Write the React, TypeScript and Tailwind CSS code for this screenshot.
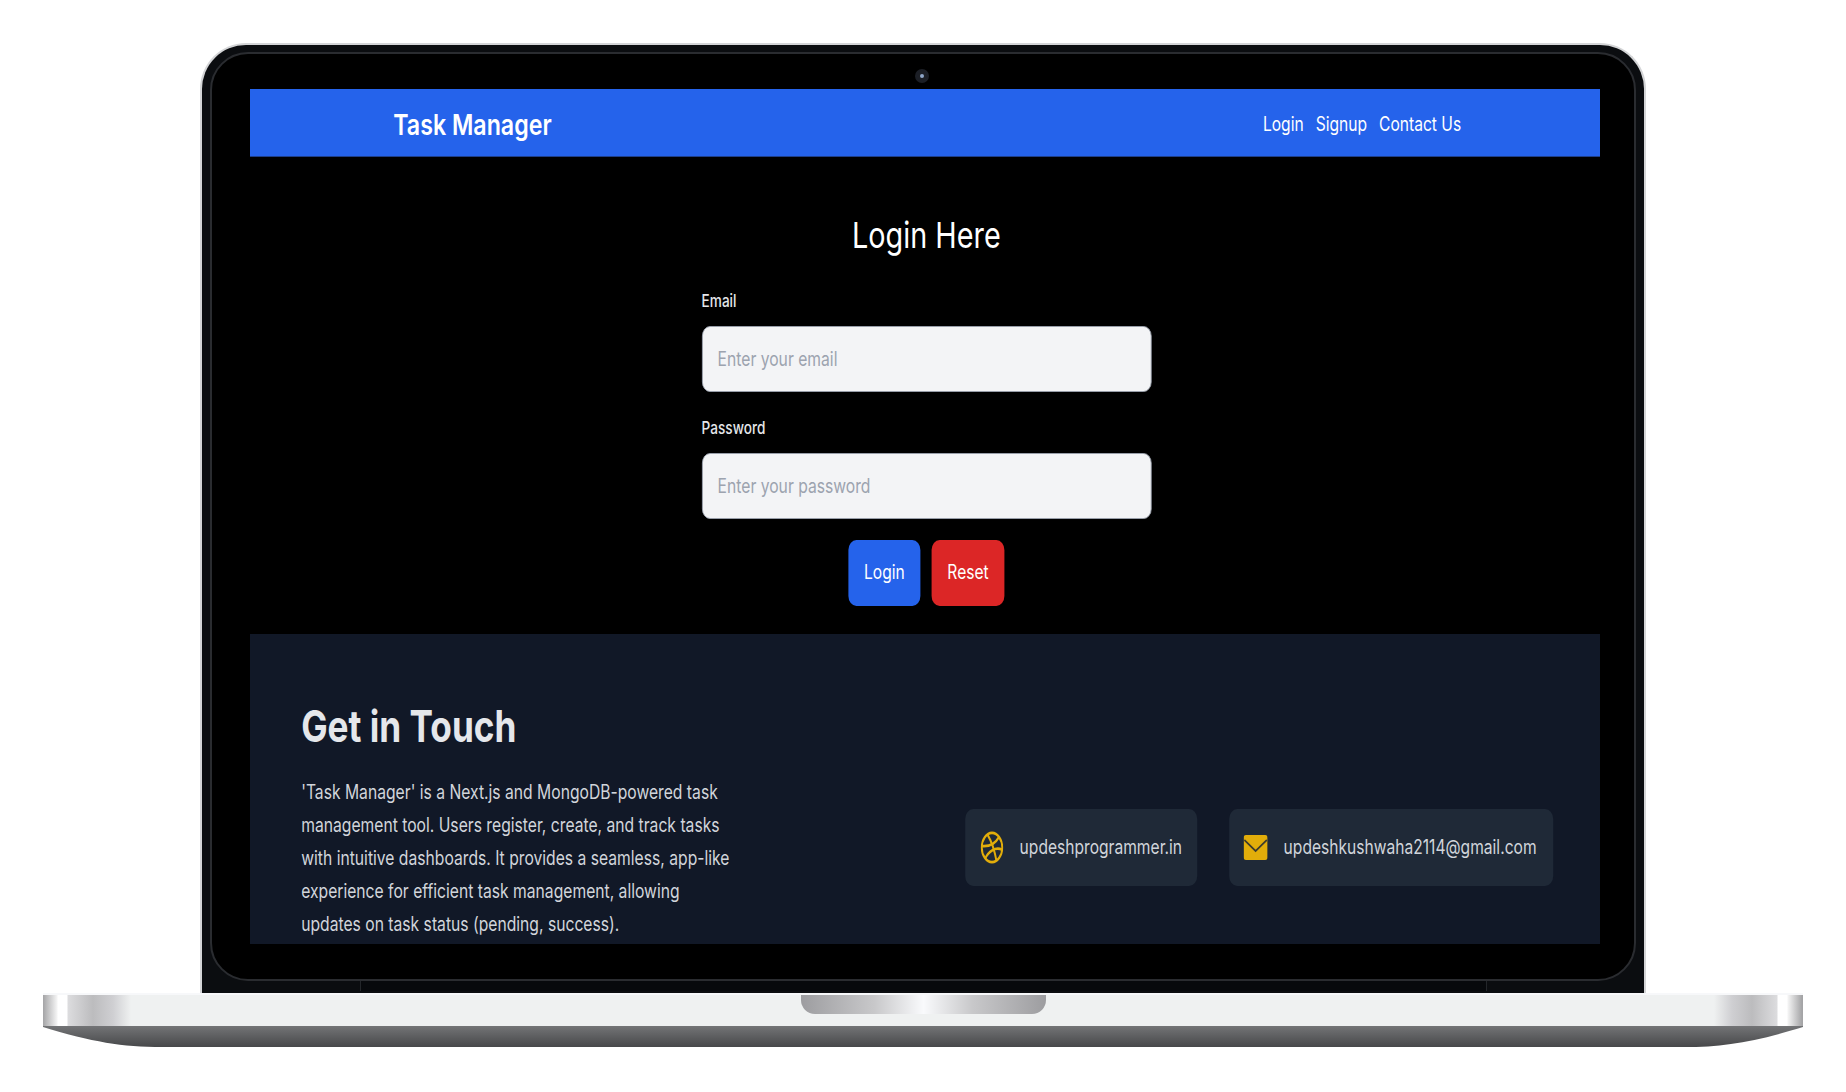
import React from "react";

const BaseSide: React.FC = () => (
  <svg className="block w-full h-[21px]" viewBox="0 0 1759 21" preserveAspectRatio="none">
    <defs>
      <linearGradient id="baseLip" x1="0" y1="0" x2="0" y2="1">
        <stop offset="0" stopColor="#737476" />
        <stop offset="1" stopColor="#47484a" />
      </linearGradient>
    </defs>
    <path d="M0 0 H1759 V1 C1710 16 1680 21 1640 21 H119 C79 21 49 16 0 1 Z" fill="url(#baseLip)" />
  </svg>
);

const DribbbleIcon: React.FC = () => (
  <svg className="w-[29px] h-[33px]" viewBox="0 0 24 24" preserveAspectRatio="none" fill="none" stroke="#e2ad0a" strokeWidth="2">
    <circle cx="12" cy="12" r="10.6" />
    <path d="M7.5 2.8 C11 7 14.5 13.5 16.5 21.4" />
    <path d="M19.2 4.4 C15.5 9 9 11.5 1.6 11" />
    <path d="M22.4 13.5 C15.5 11.5 8.5 14.5 5 20" />
  </svg>
);

const MailIcon: React.FC = () => (
  <svg className="w-[30px] h-[25px]" viewBox="0 0 30 25" preserveAspectRatio="none">
    <rect x="0" y="0" width="30" height="25" rx="3" fill="#e2ad0a" />
    <path d="M1 5 L15 16 L29 5" fill="none" stroke="#3c3b2e" strokeWidth="2" />
  </svg>
);

const Field: React.FC<{ label: string; placeholder: string; type: string }> = ({ label, placeholder, type }) => (
  <div className="flex flex-col">
    <label className="h-[37px] text-[17px] leading-[24px] font-medium text-[#e5e7eb]">{label}</label>
    <input
      type={type}
      placeholder={placeholder}
      className="h-[66px] w-full rounded-[10px] border border-[#9ca3af] bg-[#f3f4f6] px-[19px] text-[19.6px] placeholder:text-[#9ca3af]"
    />
  </div>
);

const ContactCard: React.FC<{ icon: React.ReactNode; text: string; width: string }> = ({ icon, text, width }) => (
  <div className={`flex h-[77px] items-center rounded-[10px] bg-[#1f2937] pl-[18px] ${width}`}>
    <div className="flex w-[30px] justify-center">{icon}</div>
    <span className="ml-[20px] text-[19.5px] text-[#d1d5db]">{text}</span>
  </div>
);

// page inside the bezel: the capture is squeezed sideways, so it is laid out wide and scaled back
const Screen: React.FC = () => (
  <div className="h-[855px] w-[1350px] shrink-0 overflow-hidden bg-black">
    <div className="w-[1688px] origin-left scale-x-[0.8]">
      <nav className="flex h-[68px] items-center justify-between border-b border-[#1e3f8a] bg-[#2563eb] pl-[179px] pr-[174px] pt-[4px] text-white">
        <span className="text-[29px] font-semibold">Task Manager</span>
        <ul className="flex gap-[15px] text-[19.5px]">
          <li>Login</li>
          <li>Signup</li>
          <li>Contact Us</li>
        </ul>
      </nav>

      <main className="h-[477px] pl-[3px] pt-[54px]">
        <h1 className="text-center text-[36px] leading-[48px] text-white">Login Here</h1>
        <form className="mx-auto mt-[30px] flex w-[562px] flex-col gap-[24px]">
          <Field label="Email" placeholder="Enter your email" type="email" />
          <Field label="Password" placeholder="Enter your password" type="password" />
        </form>
        <div className="mt-[21px] flex justify-center gap-[14px] text-[19.5px] text-white">
          <button className="h-[66px] w-[90px] rounded-[10px] bg-[#2563eb]">Login</button>
          <button className="h-[66px] w-[91px] rounded-[10px] bg-[#dc2626]">Reset</button>
        </div>
      </main>

      <footer className="flex h-[311px] items-start justify-between bg-[#111827] pl-[64px] pr-[59px] pt-[64px]">
        <div className="w-[545px]">
          <h2 className="text-[44px] leading-[56px] font-bold text-[#e5e7eb]">Get in Touch</h2>
          <p className="mt-[22px] text-[19.6px] leading-[33px] text-[#d1d5db]">
            'Task Manager' is a Next.js and MongoDB-powered task management tool. Users register, create, and track
            tasks with intuitive dashboards. It provides a seamless, app-like experience for efficient task
            management, allowing updates on task status (pending, success).
          </p>
        </div>
        <div className="mt-[111px] flex gap-[40px]">
          <ContactCard icon={<DribbbleIcon />} text="updeshprogrammer.in" width="w-[290px]" />
          <ContactCard icon={<MailIcon />} text="updeshkushwaha2114@gmail.com" width="w-[405px]" />
        </div>
      </footer>
    </div>
  </div>
);

export default function App() {
  return (
    <div className="h-[1092px] overflow-hidden bg-white pt-[43px] font-['Inter',sans-serif]">
      {/* lid */}
      <div className="mx-[200px] h-[950px] rounded-t-[46px] border-x-2 border-t-2 border-[#d4d5d7] bg-[#0b0d10] px-[8px] pt-[7px]">
        <div className="flex h-[929px] flex-col items-start rounded-[38px] border-2 border-[#2a2c30] bg-black pl-[38px] pt-[15px]">
          <div className="mb-[6px] ml-[665px] flex h-[14px] w-[14px] items-center justify-center rounded-full bg-[#1c1f26]">
            <div className="h-[4px] w-[4px] rounded-full bg-[#8fa6c8]" />
          </div>
          <Screen />
        </div>
        <div className="mx-auto h-[10px] w-[1127px] border-x border-[#23262a] bg-[#07090c]" />
      </div>

      {/* base */}
      <div className="mx-[43px]">
        <div className="flex h-[33px] justify-center border-t-2 border-[#f7f8fa] bg-[linear-gradient(90deg,#a4a4a6_0,#f4f4f4_14px,#ffffff_15px,#ffffff_24px,#dcdcde_25px,#bcbcbe_50px,#cfcfd2_70px,#eff1f1_88px,#eff1f1_1671px,#cfcfd2_1689px,#bcbcbe_1709px,#dcdcde_1734px,#ffffff_1735px,#ffffff_1744px,#f4f4f4_1745px,#a4a4a6_1759px)]">
          <div className="h-[19px] w-[245px] rounded-b-[14px] bg-[linear-gradient(90deg,#9d9da0,#c8c8ca_30%,#f9fafc_50%,#c8c8ca_70%,#9d9da0)]" />
        </div>
        <BaseSide />
      </div>
    </div>
  );
}
